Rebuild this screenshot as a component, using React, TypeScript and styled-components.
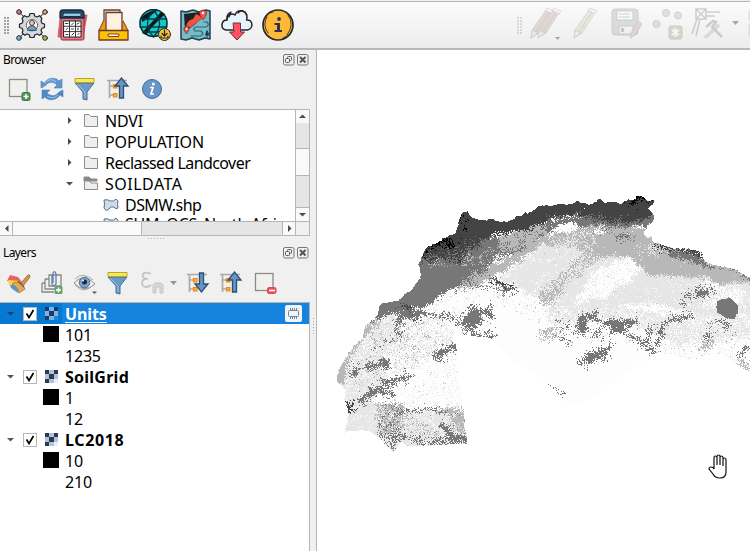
import React from 'react';
import styled, { createGlobalStyle } from 'styled-components';

const Global = createGlobalStyle`
  * { box-sizing: border-box; }
  body { margin: 0; background: #fff; overflow: hidden; }
  svg { display: block; flex: none; }
`;
const Window = styled.div`
  width: 750px; height: 551px; overflow: hidden; display: grid;
  grid-template-rows: 50px 501px; background: #f0f0f0; color: #000;
  font-family: "Noto Sans", "Open Sans", sans-serif;
`;
const MainToolbar = styled.header`
  display: flex; margin-top: 1px; height: 49px; align-items: center;
  border-top: 1px solid #b6b6b6; border-bottom: 2px solid #b8b8b8;
  background: linear-gradient(#fbfbfb, #ededed); overflow: hidden;
`;
const ToolGroup = styled.div<{ $w: number; $faded?: boolean }>`
  width: ${p => p.$w}px; flex: none; display: flex; align-items: center; gap: 9px;
  padding-left: 4px; opacity: ${p => (p.$faded ? 0.36 : 1)};
`;
const Grip = styled.i`
  width: 5px; height: 17px; flex: none; margin-right: -2px;
  background: radial-gradient(circle at 1px 1px, #a2a2a2 0.7px, transparent 1px) 0 0 / 3px 3px;
`;
const Body = styled.main`display: grid; grid-template-columns: 317px 433px;`;
const Dock = styled.aside`
  position: relative; display: flex; flex-direction: column; height: 501px;
  border-right: 1px solid #b5b5b5; padding-right: 6px; background: #f0f0f0;
`;
const Title = styled.div<{ $h: number }>`
  height: ${p => p.$h}px; display: flex; align-items: center; gap: 2px;
  padding: 0 1px 1px 3px; font-size: 12px; letter-spacing: -0.6px;
  span { flex: 1; }
`;
const PanelTools = styled.div<{ $h: number }>`
  height: ${p => p.$h}px; display: flex; align-items: center; gap: 9.3px; padding: 0 0 2px 6.5px;
`;
const BrowserTree = styled.div`
  height: 127px; border: 1px solid #b5b5b5; border-left: 0; background: #fff;
  display: grid; grid-template-columns: 295px 14px; grid-template-rows: 111px 14px;
`;
const TreeView = styled.div`overflow: hidden;`;
const BrowserRow = styled.div<{ $leaf?: boolean; $track?: number; $last?: boolean }>`
  height: 21px; display: flex; align-items: center; font-size: 16px; white-space: nowrap;
  padding-left: ${p => (p.$leaf ? 102 : 65)}px; letter-spacing: ${p => p.$track ?? -0.2}px;
  margin-top: ${p => (p.$last ? -2 : 0)}px;
  span { margin-left: ${p => (p.$leaf ? 5 : 6)}px; }
  svg + svg { margin-left: 9px; }
`;
const VScroll = styled.div`
  border-left: 1px solid #b5b5b5; display: grid; grid-template-rows: 13px 25px 28px 31px 14px;
  background: #e5e5e5;
`;
const HScroll = styled.div`
  border-top: 1px solid #b5b5b5; display: grid; grid-template-columns: 13px 129px 1fr 13px;
  background: #e5e5e5;
`;
const ScrollCell = styled.div<{ $edge: string }>`
  background: #f9f9f9; display: flex; align-items: center; justify-content: center;
  border: 0 solid #b5b5b5; border-width: ${p => p.$edge};
`;
const Corner = styled.div`border: 1px solid #b5b5b5; border-width: 1px 0 0 1px; background: #f0f0f0;`;
const Splitter = styled.div`
  height: 5px; display: flex; justify-content: center; padding-top: 2px;
  &::after { content: ""; width: 17px; height: 1px; margin-left: 2px;
    background: repeating-linear-gradient(90deg, #b5b5b5 0 1px, transparent 1px 3px); }
`;
const LayerTree = styled.div`
  flex: 1; border: 1px solid #b5b5b5; border-left: 0; border-bottom: 0; background: #fff;
`;
const LayerRow = styled.div<{ $selected?: boolean; $track: number }>`
  height: 21px; display: flex; align-items: center; padding-left: 6px; font-size: 16px; font-weight: 700;
  letter-spacing: ${p => p.$track}px;
  color: ${p => (p.$selected ? '#fff' : '#000')};
  background: ${p => (p.$selected ? 'linear-gradient(90deg,#0879d1 0 62px,#1683de 62px)' : '#fff')};
  span { text-decoration: ${p => (p.$selected ? 'underline' : 'none')}; text-underline-offset: 2px; margin-left: 7px; }
`;
const Check = styled.i`
  width: 14px; height: 14px; border: 1px solid #b7b7b7; background: #fff; margin: 0 8px;
  display: flex; align-items: center; justify-content: center;
`;
const Memory = styled.i`
  width: 17px; height: 17px; background: #f2f5f7; border-radius: 2px; margin: 0 7px 0 auto;
  display: flex; align-items: center; justify-content: center;
`;
const LegendRow = styled.div`
  height: 21px; display: flex; align-items: center; padding-left: 43px; gap: 6px; font-size: 16px; letter-spacing: -0.2px;
`;
const Swatch = styled.i<{ $c: string }>`width: 16px; height: 16px; margin-bottom: 1px; background: ${p => p.$c};`;
const EdgeGrip = styled.i`
  position: absolute; right: 2px; top: 268px; width: 1px; height: 17px;
  background: repeating-linear-gradient(#a5a5a5 0 1px, transparent 1px 3px);
`;
const Canvas = styled.section`background: #fff; position: relative;`;
const Cursor = styled.div`position: absolute; left: 391px; top: 404px;`;

/* ---------- toolbar icons ---------- */
const I32 = ({ children }: { children: React.ReactNode }) => (
  <svg width="32" height="32" viewBox="0 0 32 32" fill="none" strokeLinecap="round" strokeLinejoin="round">{children}</svg>
);
const K = '#24252b';
const Network = () => (
  <I32>
    <path d="M4 4l5 5M28 4l-5 5M4 28l5-5M28 28l-5-5" stroke="#444" strokeWidth="1.3" strokeDasharray="2 1.5" />
    <path d="M14 4.500h4l.7 2.500 2.300 1 2.300-1.300 2.600 2.600L25 12l1 2.300 2.500.7v3.500l-2.500.8-1 2.200 1.200 2.200-2.600 2.600-2.600-1.300-2.300 1-.7 2.500h-4l-.7-2.500-2.300-1-2.300 1.300-2.600-2.600L7 21.500l-1-2.200-2.500-.8V15l2.500-.7L7 12 6 9.300l2.600-2.600L11 8l2.300-1z" fill="#d4d9dd" stroke={K} strokeWidth="1.200" />
    <circle cx="16" cy="16.200" r="5.700" fill="#fff" stroke="#666" />
    <path d="M11.600 21c0-6 8.800-6 8.800 0z" fill="#5aa9c4" stroke={K} strokeWidth=".7" />
    <circle cx="16" cy="14" r="2.500" fill="#ffc6a0" stroke={K} strokeWidth=".8" />
    <circle cx="3" cy="3" r="2.300" fill="#e76d85" stroke={K} /><circle cx="29" cy="3" r="2.300" fill="#f6a246" stroke={K} />
    <circle cx="3" cy="29" r="2.300" fill="#6bc3e3" stroke={K} /><circle cx="29" cy="29" r="2.300" fill="#a5ca40" stroke={K} />
  </I32>
);
const Calculator = () => (
  <I32>
    <path d="M26 6l4 0-4 22M3 10L1 28h4" fill="#df5d6a" stroke="#df5d6a" />
    <rect x="4" y="8" width="23" height="23" rx="1.500" fill="#e8747f" stroke="#803039" />
    <path d="M3 9V4q0-3 3-3h17q4 0 4 4v4z" fill="#294c69" stroke="#142b3e" strokeWidth="1.300" />
    <rect x="6" y="4" width="18" height="3.500" rx=".6" fill="#90cbe5" stroke="#172f42" />
    <rect x="7" y="12" width="17" height="16" fill="#fff" stroke={K} strokeWidth="1" />
    <path d="M12.500 12v16M18.500 12v16M7 17.300h17M7 22.600h17M8.500 14.500h2.500M14.500 16l2-2M20 15l2-1M9 20.500l1.500-1M14.500 20h2M21 19v2M9 25.500h2M15 26l2-2M21 25h1" stroke={K} strokeWidth=".9" />
  </I32>
);
const Archive = () => (
  <I32>
    <path d="M6 22V1h16v20" fill="#f6dfcf" stroke="#6a4034" strokeWidth="1.300" />
    <path d="M5.500 12L1 21.500h29L25 12" fill="#e9a11a" stroke="#995912" strokeWidth="1.200" />
    <path d="M8 21.500V3.500h16v18" fill="#fff0df" stroke="#6a4034" strokeWidth="1.300" />
    <path d="M1 21.500h29V31H1z" fill="#ffc105" stroke="#713b20" strokeWidth="1.300" />
    <rect x="10" y="25" width="11" height="2.500" rx="1.200" fill="#fff" stroke="#75451f" strokeWidth="1.100" />
  </I32>
);
const Globe = () => (
  <I32>
    <circle cx="14.500" cy="14" r="13.500" fill="#14cac5" stroke="#092f3c" strokeWidth="1.600" />
    <path d="M3 8q7-7 16-7-5 3-9 8L3 13zM3 24L22 3l4 2-13 13-6 8z" fill="#07171c" />
    <path d="M14.500 1q-12 14 0 27M14.500 1q12 14 0 27M2 10h25M1 18h27M4 23h18" stroke="#073a43" strokeWidth="1.300" />
    <circle cx="25.500" cy="25.500" r="6" fill="#f8c331" stroke={K} />
    <path d="M25.500 21v6m-2.500-2.500 2.500 2.500 2.500-2.500M22 27v2h7v-2" stroke={K} strokeWidth="1.200" />
  </I32>
);
const MapPins = () => (
  <I32>
    <path d="M1 2l5 1 7-2 6 2 7-2 4 1v28l-5-1-6 2-7-2-6 2-5-1z" fill="#75bdc9" stroke="#223e4b" strokeWidth="1.500" />
    <path d="M4 5l16-2 1 7-8 7-8 5z" fill="#202024" />
    <path d="M6 18q1-7 7-8l3-5 4 2 2 3-6 4-5 4z" fill="#ee5540" />
    <path d="M19.500 4c0-4 7-4 7 0 0 3-3.500 7-3.500 7s-3.500-4-3.500-7zM4 20c0-4 5-4 5 0 0 2-2.500 5-2.500 5S4 22 4 20z" fill="#f05445" stroke="#79302c" strokeWidth=".7" />
    <circle cx="23" cy="4" r="1.300" fill="#fff" /><circle cx="6.500" cy="20" r="1" fill="#fff" />
    <path d="M24 13h3q3 3-1 5H16q-4 2-1 4h6q4 3-1 5h-9" stroke="#315f70" strokeWidth="1.200" />
    <path d="M27 22l-1.500 4h3zM27 25v3" fill="#183843" stroke="#183843" />
  </I32>
);
const Cloud = () => (
  <I32>
    <path d="M7 21H5C-1 20 0 11 6 11c0-6 5-7 8-5 2-6 11-6 12 2 0 1 0 2-.5 3 7-1 7 9 1 10H7z" fill="#e5f3fb" stroke={K} strokeWidth="1.500" />
    <path d="M6 11q-1-6 4-8l-2 5M17 4q5-5 9 2" stroke={K} strokeWidth="1.300" />
    <path d="M12.500 14h7v9h4L16 31l-7.500-8h4z" fill="#ff5263" stroke="#742c38" />
  </I32>
);
const BigInfo = () => (
  <I32>
    <circle cx="16" cy="16" r="15" fill="#ffb938" stroke="#25282c" strokeWidth="1.700" />
    <path d="M5 8Q0 16 6 24M26 6q7 9-1 20M8 4l3-1M21 29l4-2" stroke="#423b2b" />
    <circle cx="17" cy="10" r="1.900" fill="#34354d" />
    <path d="M12.500 14h5.500v7H20v2h-7.500v-2h2.500v-5h-2.500z" fill="#34354d" />
  </I32>
);
const Pencil = ({ tone, x = 0 }: { tone: string; x?: number }) => (
  <g transform={`translate(${x} 0)`} strokeWidth=".8">
    <path d="M3 23L17 3l6 3-13 20-8 5z" fill={tone} stroke="#999" />
    <path d="M16 3l2-2 7 3-2 3z" fill="#eee" stroke="#999" /><path d="M7 25L20 5M2 31l1-8 6 3z" fill="#ddd" stroke="#888" />
  </g>
);
const FadedTools = () => (
  <svg width="229" height="36" viewBox="0 0 229 36" fill="none" stroke="#888">
    <Pencil tone="#c0a198" /><Pencil tone="#c0a198" x={7} />
    <path d="M26 30h5l-2.500 3z" fill="#222" stroke="none" />
    <Pencil tone="#cfceaf" x={43} />
    <rect x="83" y="2" width="26" height="26" rx="3" fill="#a8afb2" /><path d="M88 4h16v9H88z" fill="#fff" /><path d="M90 7h11M90 10h11" />
    <path d="M90 19h14v8H90z" fill="#eee" /><path d="M92 21h3v4h-3z" fill="#777" stroke="none" />
    <path d="M102 26l7-12 4 3-7 11-5 3z" fill="#c5a197" />
    <circle cx="137" cy="6" r="3.500" fill="#b4bdb2" /><circle cx="149" cy="8.500" r="3.500" fill="#b4bdb2" /><circle cx="127.500" cy="17" r="3.500" fill="#b4bdb2" />
    <rect x="140" y="19" width="13" height="13" rx="2" fill="#aaa078" /><path d="M146.500 21v9M143 23l7 5M143 28l7-5" stroke="#fff" strokeWidth="2" />
    <path d="M167 2h10v10h-10zM167 2l10 10M177 2l-10 10M177 5h14M177 9h9M168 12l-5 15M171 12l-4 17" strokeWidth="1.500" />
    <path d="M188 17l-13 13 3 1 13-12z" fill="#bbb98d" strokeWidth=".5" /><path d="M177 20l7-6 3 1-4 5 10 10" strokeWidth="2.500" />
    <path d="M203 14h7l-3.500 4z" fill="#222" stroke="none" /><path d="M220 4h12v9h-12zM220 17h12v12h-12z" fill="#b9b794" stroke="#bbb" />
  </svg>
);

/* ---------- panel icons ---------- */
const I24 = ({ children }: { children: React.ReactNode }) => (
  <svg width="24" height="24" viewBox="0 0 24 24" fill="none">{children}</svg>
);
const BoxIcon = ({ minus }: { minus?: boolean }) => (
  <I24>
    <rect x="2.500" y="2.500" width="17.500" height="17" fill="#f0f0ee" stroke="#8b8c84" strokeWidth="1.300" />
    {minus ? <rect x="14.500" y="16.500" width="8.500" height="6" rx="1.500" fill="#ee4e5a" stroke="#d44c56" />
      : <rect x="15" y="15.500" width="8" height="8" rx="1.500" fill="#559259" stroke="#3b7844" />}
    <path d={minus ? 'M16 19.500h6' : 'M19 17v5M16.500 19.500h5'} stroke="#fff" strokeWidth="1.500" />
  </I24>
);
const Refresh = () => (
  <I24>
    <path d="M1 11V4l3 2C9-1 17 1 19 4l3-2v9h-8l3-3C13 4 8 5 6 8q-2 2-5 3z" fill="#5f98ce" stroke="#4b80b5" strokeWidth=".6" />
    <path d="M23 13v7l-3-2C15 25 7 23 5 20l-3 2v-9h8l-3 3c4 4 9 3 11 0q2-2 5-3z" fill="#4f8ac5" stroke="#4b80b5" strokeWidth=".6" />
    <path d="M4 6q7-6 12-1M7 19q6 4 11-1" stroke="#a8cae9" />
  </I24>
);
const Funnel = () => (
  <I24>
    <path d="M2 6h19l-7 9v8l-4-1v-7z" fill="#699bc9" stroke="#476f97" /><path d="M4 7l8 8v6" stroke="#9bc2e7" />
    <path d="M2 1.500h19v4H2z" fill="#fce94f" stroke="#b7a730" />
  </I24>
);
const TreeArrow = ({ down }: { down?: boolean }) => (
  <I24>
    <path d="M1 3.500h20M3.500 4v17M4 9h5M4 18h5" stroke="#aaa" strokeWidth="1.700" />
    <path d="M7.500 7.500h3.500v3.500H7.500zM7.500 16.500h3.500v3.500H7.500z" fill="#ffad36" stroke="#ee8b16" strokeWidth="1.200" />
    <path d={down ? 'M13.500 2h4v11h4.500l-6.500 8L9 13h4.500z' : 'M13.500 21h4V9h4.500L15.500 1 9 9h4.500z'} fill="#6895c4" stroke="#294f76" strokeWidth="1.300" />
  </I24>
);
const SmallInfo = () => (
  <I24>
    <circle cx="12" cy="12" r="9.500" fill="#6796c7" stroke="#416d9d" />
    <circle cx="13.300" cy="7" r="1.500" fill="#fff" /><path d="M10 10.500h3l-2 6.500h3" stroke="#fff" strokeWidth="1.700" />
  </I24>
);
const Brush = () => (
  <I24>
    <path d="M3 4l8 2 4 5-5 3-10-4z" fill="#ee6064" /><path d="M1 9l12 1-3 6-8-2z" fill="#f3dc45" /><path d="M3 14l9 0-1 8-7-5z" fill="#5c93ce" />
    <path d="M8 11q7 0 10 7l-6 4q-1-6-7-9z" fill="#dcac61" stroke="#b5803c" /><path d="M14 12l7-8q2-1 2 2l-7 9z" fill="#ce9651" stroke="#a97439" />
    <path d="M11 10l6 6" stroke="#806243" strokeWidth="1.500" />
  </I24>
);
const AddGroup = () => (
  <I24>
    <path d="M2 12v9h12M5 8v10h12M9 4h12v11H9zM2 12h3M5 8h4" stroke="#858981" strokeWidth="1.300" />
    <path d="M12 4v9q2 3 4 0V3q-1-4-3-1v10" stroke="#597fae" strokeWidth="1.300" />
    <rect x="14.500" y="15" width="8" height="8" rx="1.500" fill="#66a16c" /><path d="M18.500 16.500v5M16 19h5" stroke="#fff" strokeWidth="1.500" />
  </I24>
);
const Eye = () => (
  <I24>
    <path d="M2 8q8-8 18 1M2 14q9 10 18 0" stroke="#aaa" strokeWidth="1" /><path d="M1 12Q11 1 22 13 11 23 1 12z" fill="#f7f7f5" stroke="#8c8d8b" />
    <circle cx="11.500" cy="11.500" r="5.300" fill="#7fa3ca" stroke="#46678d" /><circle cx="11.500" cy="11" r="2.500" fill="#172c45" /><circle cx="10" cy="9.500" r="1" fill="#fff" />
    <path d="M19 20.500h5L21.500 23z" fill="#555" />
  </I24>
);
const Epsilon = () => (
  <svg width="37" height="24" viewBox="0 0 37 24" fill="none"><path d="M11 3C5 0 0 3 4 7l4 1c-7-1-8 7-2 8q3 0 5-2" stroke="#c4c4c4" strokeWidth="1.800" /><path d="M13 14v8h3v-6h4v6h3v-8l-2-2h-6z" fill="#d6d6d6" stroke="#c6c6c6" /><path d="M30 10h7l-3.500 4z" fill="#949494" /></svg>
);
const TitleButton = ({ close }: { close?: boolean }) => (
  <svg width="12" height="12" viewBox="0 0 12 12" fill="none" stroke="#555">
    <rect x=".5" y=".5" width="10.500" height="10.500" rx="1.500" stroke="#777" />
    {close ? <path d="M3 3l5.500 5.500M8.500 3L3 8.500" strokeWidth="2" /> : <><rect x="4.500" y="2.500" width="4" height="4" rx="1" /><rect x="2.500" y="4.500" width="4" height="4" rx="1" fill="#f0f0f0" /></>}
  </svg>
);
const Arrow = ({ dir, color = '#4c4c4c' }: { dir: 'l' | 'r' | 'u' | 'd'; color?: string }) => (
  <svg width="9" height="9" viewBox="0 0 9 9"><path d={{ l: 'M6.500 1v7L3 4.500z', r: 'M3 1v7l3.500-3.500z', u: 'M1 6h7L4.500 2.500z', d: 'M1 3h7L4.500 6.500z' }[dir]} fill={color} /></svg>
);
const Folder = ({ open }: { open?: boolean }) => (
  <svg width="16" height="15" viewBox="0 0 16 15" fill="#eee" stroke="#8c8c8c">
    {open ? <><path d="M1 1h5l2 2h6v2H1z" fill="#888" /><path d="M1.500 13.500V5H7l1 2h6.500v6.500z" /></> : <path d="M1.500 13.500V1.500H6l2 2h6.500v10z" />}
  </svg>
);
const Shape = () => <svg width="18" height="16" viewBox="0 0 18 16"><path d="M2 3q4-1 6 1 4 1 6-2l2 2q-1 4 0 7-2 2-4-1-4-1-5 2-3 3-5-1 1-4 0-8z" fill="#cbddec" stroke="#5d6e85" /></svg>;
const Raster = ({ selected }: { selected?: boolean }) => {
  const cells = ['212', '121', '210'];
  const tones = selected ? ['#2384d6', '#7db4e5', '#1b3c66'] : ['#e8eff8', '#adc5e2', '#2f3a4c'];
  return <svg width="13" height="13" viewBox="0 0 13 13" shapeRendering="crispEdges">{cells.flatMap((r, y) => [...r].map((c, x) => <rect key={`${x}${y}`} x={[0, 4, 9][x]} y={[0, 4, 9][y]} width={[4, 5, 4][x]} height={[4, 5, 4][y]} fill={tones[+c]} />))}</svg>;
};
const Tick = () => <svg width="10" height="10" viewBox="0 0 10 10" fill="none" stroke="#000" strokeWidth="1.700"><path d="M1.500 4.500L4 8.500 8.500 1" /></svg>;

/* ---------- classified raster ---------- */
type Pt = [number, number];
const P = (s: string): Pt[] => s.split(' ').map(v => v.split(',').map(Number) as Pt);
const outline = P('460,215 463,212 468,211 469,215 473,218 484,220 493,218 496,221 507,221 512,219 517,215 520,216 525,211 527,213 534,210 540,205 552,205 560,203 568,205 575,201 583,202 588,204 594,202 600,198 603,202 613,201 620,203 628,199 632,200 638,195 644,197 647,201 654,199 652,204 647,208 652,212 654,218 650,225 643,231 644,234 648,238 651,235 652,241 657,243 673,248 690,248 702,252 703,258 705,262 716,265 727,267 737,270 748,277 752,275 752,372 740,367 730,360 715,352 690,360 673,355 657,352 623,373 603,390 580,402 565,403 547,383 540,375 513,360 490,337 456,334 456,348 458,377 463,410 465,433 467,435 467,443 407,446 402,441 398,445 393,452 387,447 380,438 367,430 345,431 343,435 347,420 347,407 343,400 345,390 336,380 339,367 350,350 362,337 365,325 377,315 380,303 397,300 413,288 421,275 418,263 425,248 440,240 455,232');
type Layer = { c: number; p: number; poly?: Pt[]; line?: Pt[]; r?: number };
const area = (c: number, p: number, s: string): Layer => ({ c, p, poly: P(s) });
const line = (c: number, p: number, r: number, s: string): Layer => ({ c, p, r, line: P(s) });
const layers: Layer[] = [
  area(5, .93, '456,338 490,300 530,320 590,340 655,350 600,410 530,400 470,360'),
  area(4, .6, '545,300 600,305 690,315 752,310 752,335 680,345 620,320 550,325'),
  area(4, .8, '500,278 540,245 600,235 650,250 752,275 752,312 710,316 650,302 595,309 560,305 540,300'),
  area(4, .66, '330,390 345,353 365,325 397,302 402,335 380,360 388,380 370,403 340,410'),
  area(4, .74, '335,405 365,395 396,412 402,455 385,460 360,440 330,440'),
  area(4, .72, '395,415 430,410 463,408 470,450 392,452'),
  area(4, .35, '395,315 450,310 455,350 420,365 390,380'),
  area(3, .22, '370,325 405,318 455,335 456,350 405,365 350,390 365,350'),
  area(5, .72, '590,275 635,250 643,268 605,297 572,305'),
  area(5, .6, '700,280 745,290 740,315 704,305'),
  area(3, .9, '455,285 500,260 540,238 600,222 645,228 657,236 705,258 752,276 752,284 725,283 695,275 650,274 625,255 595,255 570,247 540,244 515,263 475,286'),
  area(4, .4, '550,240 585,225 600,250 575,260'), area(4, .5, '640,243 665,250 659,257 643,250'),
  area(3, .42, '585,250 615,238 605,255 560,287 545,300 535,295'),
  area(3, .75, '345,350 365,325 384,317 352,350 345,382 330,382'),
  area(2, .94, '374,319 374,300 392,296 409,285 415,275 412,260 440,239 480,240 540,224 600,213 660,208 655,226 600,224 580,226 565,222 543,234 522,250 497,257 472,280 448,289 431,302 405,311'),
  area(3, .7, '498,235 542,224 548,234 529,248 500,250'), area(3, .35, '467,254 520,246 497,260 470,270'),
  line(3, .4, 4, '430,262 467,259'), line(3, .4, 5, '464,285 490,270'),
  area(1, .94, '464,204 479,212 500,212 490,235 470,251 457,262 430,260 412,260 418,245 440,235 451,226 455,211'),
  area(2, .35, '415,257 445,250 476,237 487,242 459,266 417,269'),
  area(1, .98, '483,211 507,214 527,204 540,199 575,194 600,190 638,188 662,194 656,205 650,219 624,223 600,221 577,214 550,219 532,228 508,230 483,237'),
  line(2, .55, 3, '547,221 570,216 601,219'), line(2, .6, 3, '600,225 645,221'),
  line(1, .7, 3, '660,246 680,246 702,254'), line(2, .75, 4, '671,252 684,253 703,262'),
  line(2, .6, 1.5, '705,263 731,268 750,278'),
  line(0, .65, 2.500, '436,245 446,240 451,243'), line(0, .6, 1.500, '423,254 430,246'), line(0, .24, 9, '447,240 462,222'), line(0, .85, 2.500, '632,203 639,197 644,196'), line(0, .5, 1, '647,203 653,200'),
  line(2, .95, 6, '470,318 475,316'), line(2, .7, 3, '473,311 488,309 490,316'), line(2, .75, 2, '460,322 475,324'), line(2, .7, 3, '466,325 476,336 492,335'),
  line(2, .9, 2.500, '434,357 445,350 458,345'), line(2, .9, 2, '361,399 382,385 408,376'),
  line(1, .85, 1.500, '401,307 411,311 417,316'), line(2, .85, 3, '400,318 405,314 418,315'), line(2, .65, 2, '418,314 455,317'), line(2, .65, 2, '401,308 397,337'),
  line(2, .3, 6, '371,318 394,310'),
  line(2, .85, 2, '353,373 357,367'), line(2, .7, 3, '368,366 385,363'), line(2, .5, 1, '370,350 390,340'), line(2, .65, 3, '381,391 389,394'),
  area(2, .5, '383,402 396,405 400,435 393,453 377,435'), area(3, .55, '374,403 403,402 402,430 381,435'), line(1, .9, 2, '348,405 349,411'),
  line(2, .7, 1, '394,412 428,409 463,416'), line(2, .95, 3, '443,427 448,434 467,441'), line(2, .5, 3, '402,437 432,441 464,442'),
  area(3, .75, '435,408 464,409 466,433 454,428 450,415'), line(3, .35, 6, '401,419 432,433'),
  line(2, .35, 3, '449,289 478,284 514,289'), line(2, .8, 1.500, '491,278 510,288'), line(1, .65, 1, '490,277 513,289'),
  line(3, .6, 5, '545,300 559,290'), line(2, .85, 2, '618,236 629,238'), line(2, .35, 1, '596,228 596,240'),
  line(5, 1, 1.3, '595,231 600,231'),
  line(2, .9, 3, '699,293 705,292'), line(2, .95, 1.500, '700,291 712,289'), line(2, .35, 4, '686,291 684,299'),
  line(2, .7, 3, '726,323 726,328'),
  { c: 2, p: 1, poly: P('716,307 717,301 722,298 728,297 733,300 737,304 738,309 737,314 733,319 726,318 720,314 716,312') },
  line(2, .95, 4, '617,329 621,324'), line(2, .8, 3.500, '607,323 634,322'), line(2, .75, 4, '582,318 580,330'),
  line(2, .8, 3, '590,316 596,317'), line(2, .65, 2, '600,321 609,327 623,331 645,345'),
  line(2, .93, 3.500, '588,359 601,352'), line(2, .65, 3, '582,361 602,356 611,344'), line(2, .75, 3, '594,334 599,331'),
  line(2, .65, 1.500, '649,326 648,340 654,352'), line(2, .85, 1.500, '658,345 662,326 668,320 688,317'),
  line(2, .45, 2, '560,320 569,327 561,333 566,343'), line(3, .45, 6, '545,335 555,333'),
  line(2, .8, 1.500, '738,355 746,347 752,347'), line(3, .8, 2, '740,361 752,370'), line(2, .85, 1, '705,336 707,331'), line(2, .7, 1, '712,326 721,318'),
  line(3, .65, 2.500, '700,347 709,343'), line(2, .35, 2, '690,294 684,307 692,315'), line(2, .25, 2, '551,387 565,393'), line(2, .4, 1, '728,341 731,338'),
];
function hash(x: number, y: number, n = 0) {
  let h = Math.imul(x, 374761393) ^ Math.imul(y, 668265263) ^ Math.imul(n, 1442695041);
  h = Math.imul(h ^ (h >>> 13), 1274126177);
  return ((h ^ (h >>> 16)) >>> 0) / 4294967296;
}
function noise(x: number, y: number, n: number) {
  const ix = Math.floor(x), iy = Math.floor(y), fx = x - ix, fy = y - iy;
  return (hash(ix, iy, n) * (1 - fx) + hash(ix + 1, iy, n) * fx) * (1 - fy) + (hash(ix, iy + 1, n) * (1 - fx) + hash(ix + 1, iy + 1, n) * fx) * fy;
}
function inside(p: Pt[], x: number, y: number) {
  let hit = false;
  for (let i = 0, j = p.length - 1; i < p.length; j = i++) {
    const [a, b] = p[i], [c, d] = p[j];
    if (b > y !== d > y && x < ((c - a) * (y - b)) / (d - b) + a) hit = !hit;
  }
  return hit;
}
function distance(p: Pt[], x: number, y: number) {
  let best = 999;
  for (let i = 1; i < p.length; i++) {
    const [a, b] = p[i - 1], dx = p[i][0] - a, dy = p[i][1] - b;
    const t = Math.max(0, Math.min(1, ((x - a) * dx + (y - b) * dy) / (dx * dx + dy * dy)));
    best = Math.min(best, Math.hypot(x - a - t * dx, y - b - t * dy));
  }
  return best;
}
const palette = ['#050505', '#444', '#777', '#b8b8b8', '#e6e6e6', '#fdfdfd'];
function classify(x: number, y: number) {
  const edge = (noise(x / 2, y / 2, 91) - .5) * 1.4;
  if (!inside(outline, x + edge, y + edge)) return -1;
  const jx = x + (noise(x / 5, y / 5, 1) - .5) * 6 + (hash(x, y, 3) - .5) * 5;
  const jy = y + (noise(x / 5, y / 5, 2) - .5) * 6 + (hash(x, y, 4) - .5) * 5;
  for (let i = layers.length - 1; i >= 0; i--) {
    const l = layers[i];
    let chance = 0;
    if (l.poly) chance = inside(l.poly, l.p === 1 ? x + edge : jx, l.p === 1 ? y + edge : jy) ? l.p : 0;
    else if (l.line && l.r) {
      const d = distance(l.line, jx, jy);
      chance = d < l.r ? l.p : d < l.r + 4 ? l.p * .28 : 0;
    }
    if (chance && hash(x, y, 7 + i) * .65 + noise(x / 4, y / 4, 80 + i) * .35 < chance) return l.c;
  }
  const r = hash(x, y, 6), cluster = noise(x / 9, y / 9, 5);
  return r < cluster * .018 ? 3 : r < cluster * .17 ? 4 : 5;
}
function buildRaster() {
  const paths = palette.map(() => '');
  for (let y = 194; y < 455; y++) {
    let start = 330, current = -1;
    for (let x = 330; x <= 750; x++) {
      const c = x === 750 ? -1 : classify(x, y);
      if (c !== current) {
        if (current >= 0) paths[current] += `M${start} ${y}h${x - start}v1H${start}z`;
        start = x; current = c;
      }
    }
  }
  return paths;
}
const rasterPaths = buildRaster();
const RasterMap = () => (
  <svg width="433" height="501" viewBox="317 50 433 501" shapeRendering="crispEdges">
    {rasterPaths.map((d, i) => <path key={i} d={d} fill={palette[i]} />)}
  </svg>
);
const Hand = () => (
  <svg width="20" height="27" viewBox="0 0 20 27"><path d="M6 15V4q0-2 1.500-2T9 4V2.500Q9 1 10.500 1T12 2.500V4q0-2 1.500-2T15 4v2q0-2 1.500-2T18 6v12q0 6-6 6-5 0-7-4l-4-5q0-2 2-2t3 2M9 4v7M12 4v7M15 5v7" fill="#fff" stroke="#111" strokeWidth="1.200" /></svg>
);

const folders = [{ name: 'NDVI', track: -0.2 }, { name: 'POPULATION', track: -0.1 }, { name: 'Reclassed Landcover', track: -0.57 }, { name: 'SOILDATA', track: 0.5, open: true }];
const groups = [{ name: 'Units', track: -0.1, values: ['101', '1235'], selected: true }, { name: 'SoilGrid', track: 0.25, values: ['1', '12'] }, { name: 'LC2018', track: 0.65, values: ['10', '210'] }];

export default function App() {
  return <><Global /><Window>
    <MainToolbar>
      <ToolGroup $w={513}><Grip /><Network /><Calculator /><Archive /><Globe /><MapPins /><Cloud /><BigInfo /></ToolGroup>
      <ToolGroup $w={237} $faded><Grip /><FadedTools /></ToolGroup>
    </MainToolbar>
    <Body>
      <Dock>
        <Title $h={20}><span>Browser</span><TitleButton /><TitleButton close /></Title>
        <PanelTools $h={39}><BoxIcon /><Refresh /><Funnel /><TreeArrow /><SmallInfo /></PanelTools>
        <BrowserTree>
          <TreeView>
            {folders.map(f => <BrowserRow key={f.name} $track={f.track}><Arrow dir={f.open ? 'd' : 'r'} /><Folder open={f.open} /><span>{f.name}</span></BrowserRow>)}
            <BrowserRow $leaf $track={-0.55}><Shape /><span>DSMW.shp</span></BrowserRow>
            <BrowserRow $leaf $last><Shape /><span>SUM_OCS_North Afri</span></BrowserRow>
          </TreeView>
          <VScroll><ScrollCell $edge="0"><Arrow dir="u" /></ScrollCell><div /><ScrollCell $edge="1px 0" /><div /><ScrollCell $edge="1px 0 0"><Arrow dir="d" /></ScrollCell></VScroll>
          <HScroll><ScrollCell $edge="0 1px 0 0"><Arrow dir="l" /></ScrollCell><ScrollCell $edge="0 1px 0 0" /><div /><ScrollCell $edge="0 0 0 1px"><Arrow dir="r" /></ScrollCell></HScroll><Corner />
        </BrowserTree>
        <Splitter />
        <Title $h={24}><span>Layers</span><TitleButton /><TitleButton close /></Title>
        <PanelTools $h={37}><Brush /><AddGroup /><Eye /><Funnel /><Epsilon /><TreeArrow down /><TreeArrow /><BoxIcon minus /></PanelTools>
        <LayerTree>
          {groups.map(g => <React.Fragment key={g.name}>
            <LayerRow $selected={g.selected} $track={g.track}><Arrow dir="d" color={g.selected ? '#173d65' : '#555'} /><Check><Tick /></Check><Raster selected={g.selected} /><span>{g.name}</span>{g.selected && <Memory><svg width="13" height="13" viewBox="0 0 13 13" fill="none" stroke="#6d879a"><rect x="1.500" y="3.500" width="10" height="6" rx="1" /><path d="M3.500 1v2M5.500 1v2M7.500 1v2M9.500 1v2M3.500 10v2M5.500 10v2M7.500 10v2M9.500 10v2" /></svg></Memory>}</LayerRow>
            {g.values.map((value, i) => <LegendRow key={value}><Swatch $c={i ? '#fff' : '#000'} />{value}</LegendRow>)}
          </React.Fragment>)}
        </LayerTree>
        <EdgeGrip />
      </Dock>
      <Canvas><RasterMap /><Cursor><Hand /></Cursor></Canvas>
    </Body>
  </Window></>;
}
